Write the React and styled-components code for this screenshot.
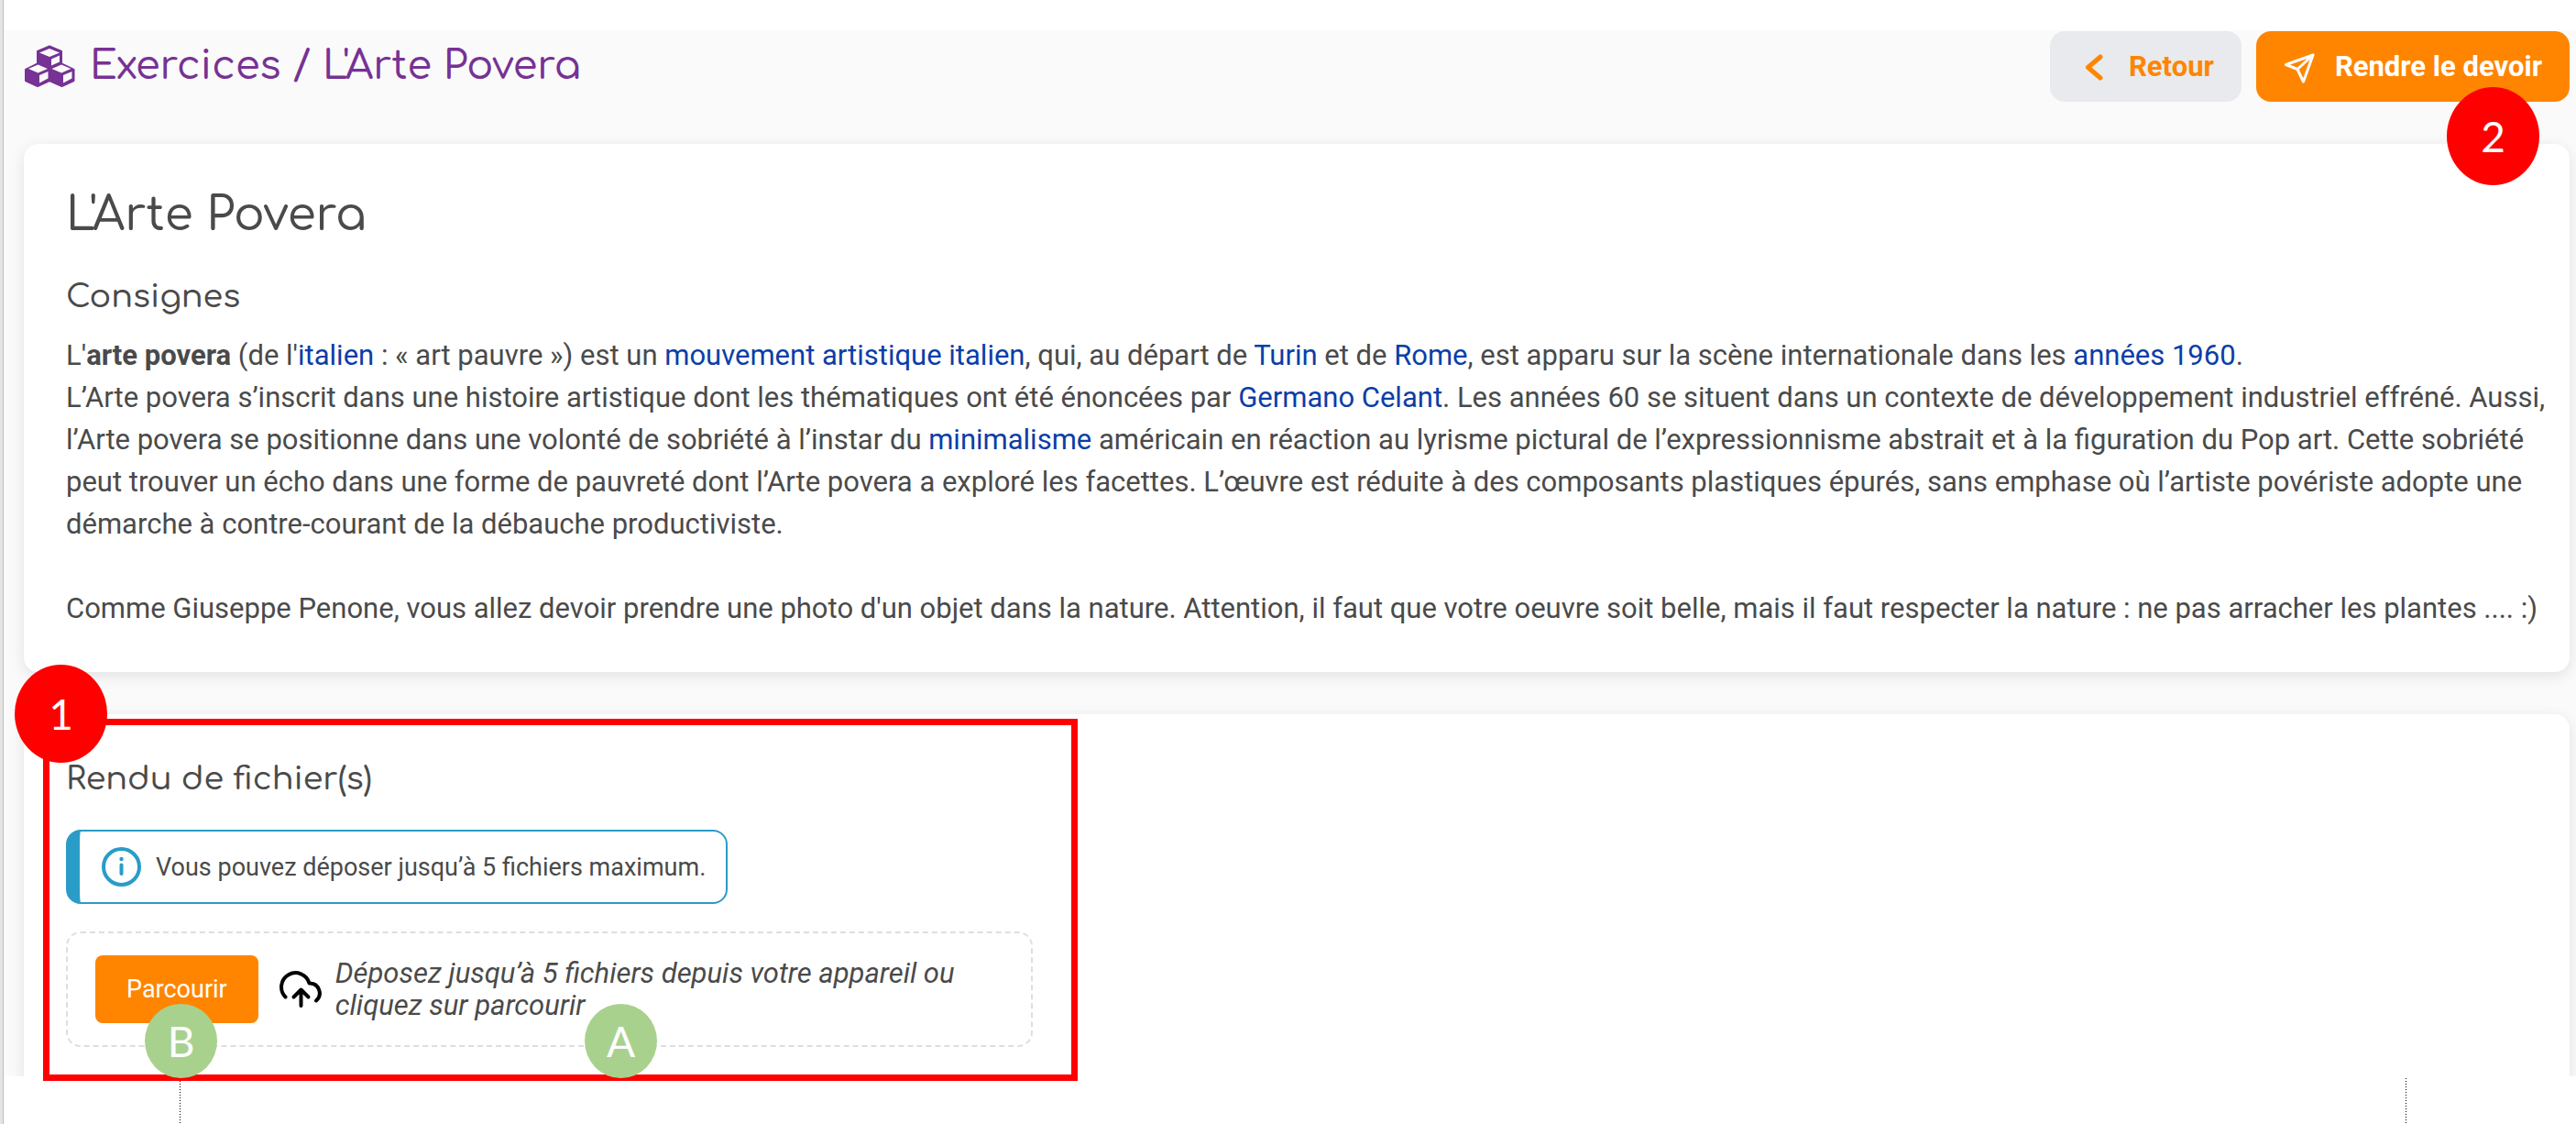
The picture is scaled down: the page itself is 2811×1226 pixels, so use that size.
import React from "react";
import styled, { createGlobalStyle } from "styled-components";

const GlobalStyle = createGlobalStyle`
  * { box-sizing: border-box; }
  body { margin: 0; background: #fff; color: #4a4a4a; font-family: Roboto, "Liberation Sans", sans-serif; }
  h1, h2, h3, p { margin: 0; }
  svg { display: block; flex: none; }
`;

const headingFont = `Comfortaa, "Open Sans", sans-serif`;

const Shell = styled.div`
  border-left: 3px solid #e4e4e4;
`;

const Page = styled.div`
  display: flex;
  flex-direction: column;
  min-height: 100vh;
  padding-top: 33px;
  border-left: 1px solid #bdbdbd;
`;

const Sheet = styled.main`
  padding: 1px 7px 0 22px;
  background: #fafafa;
`;

const Header = styled.header`
  display: flex;
  justify-content: space-between;
  align-items: center;
  margin-bottom: 46px;
`;

const Heading = styled.h1`
  display: flex;
  align-items: center;
  gap: 16px;
  color: #763294;
  font: 500 43px/52px ${headingFont};
`;

const HeadingText = styled.span`
  padding-bottom: 2px;
`;

const Actions = styled.div`
  display: flex;
  gap: 16px;
`;

const ActionButton = styled.button`
  position: relative;
  display: flex;
  align-items: center;
  gap: 22px;
  height: 77px;
  padding: 0 30px;
  border: 0;
  border-radius: 16px;
  background: ${(p) => (p.$primary ? "#ff8500" : "#e9eaee")};
  color: ${(p) => (p.$primary ? "#fff" : "#ff8500")};
  font: 700 31px/36px Roboto, sans-serif;
`;

const Card = styled.section`
  position: relative;
  padding: 46px 20px ${(p) => (p.$last ? "32px" : "46px")} 46px;
  margin-bottom: ${(p) => (p.$last ? "0" : "46px")};
  border-radius: ${(p) => (p.$last ? "16px 16px 0 0" : "16px")};
  background: #fff;
  box-shadow: 0 4px 16px rgba(0, 0, 0, 0.1);
`;

const Title = styled.h2`
  margin-bottom: 32px;
  font: 500 50px/64px ${headingFont};
`;

const Subtitle = styled.h3`
  margin-bottom: ${(p) => p.$gap};
  font: 500 35px/50px ${headingFont};
`;

const Paragraph = styled.p`
  font-size: 31px;
  line-height: 46px;
  & + & { margin-top: 46px; }
`;

const Link = styled.a`
  color: #0a3ea8;
  text-decoration: none;
`;

const Notice = styled.div`
  display: flex;
  align-items: center;
  gap: 16px;
  width: fit-content;
  height: 81px;
  padding: 0 22px 0 24px;
  border: 2px solid #2a9cc8;
  border-left-width: 15px;
  border-radius: 16px;
  font-size: 27px;
  margin-bottom: 30px;
`;

const DropZone = styled.div`
  display: flex;
  align-items: center;
  width: 1055px;
  max-width: 100%;
  padding: 24px 30px;
  border: 2px dashed #dedede;
  border-radius: 16px;
`;

const BrowseButton = styled.button`
  height: 74px;
  margin-right: 22px;
  padding: 0 34px;
  border: 0;
  border-radius: 8px;
  background: #ff8500;
  color: #fff;
  font: 400 27px/32px Roboto, sans-serif;
`;

const DropText = styled.p`
  flex: 1;
  margin-left: 12px;
  font-style: italic;
  font-size: 31px;
  line-height: 35px;
`;

const Frame = styled.div`
  position: absolute;
  z-index: 2;
  left: 21px;
  top: 5px;
  bottom: -5px;
  width: 1129px;
  border: 7px solid #f00;
`;

const Marker = styled.span`
  position: absolute;
  z-index: 3;
  display: flex;
  align-items: center;
  justify-content: center;
  border-radius: 50%;
  color: #fff;
  font: 400 46px/54px Lato, sans-serif;
`;

const StepMarker = styled(Marker)`
  width: 101px;
  height: 107px;
  background: #f00;
`;

const PartMarker = styled(Marker)`
  width: 79px;
  height: 81px;
  background: #a9d18e;
`;

const SubmitMarker = styled(StepMarker)`
  top: 61px;
  right: 33px;
`;

const UploadMarker = styled(StepMarker)`
  top: -54px;
  left: -10px;
`;

const BrowseMarker = styled(PartMarker)`
  bottom: -2px;
  left: 132px;
`;

const DropMarker = styled(PartMarker)`
  bottom: -2px;
  left: 612px;
`;

const Footer = styled.footer`
  position: relative;
  z-index: 1;
  display: flex;
  flex: 1;
  justify-content: space-between;
  min-height: 52px;
  padding: 2px 185px 0 192px;
  background: #fff;
`;

const Guide = styled.div`
  width: 1px;
  background: repeating-linear-gradient(#000 0 1px, transparent 1px 3px);
`;

function CubesIcon() {
  return (
    <svg width="56" height="47" viewBox="16 10 56 47" aria-hidden="true">
      <g fill="#763294" stroke="#763294" strokeWidth="2" strokeLinejoin="round">
        <path d="M44 11.5 57 17V31L44 37 31 31V17Z" />
        <path d="M31 30.5 44 37V49L31 55 18 49V37Z" />
        <path d="M57 30.5 70.500 37V49L57.500 55 44 49V37Z" />
      </g>
      <g fill="#fafafa">
        <path d="M44 14 55 18.500 44 23 33 18.500Z" />
        <path d="M46 25.500 55 21.500V28.500L46 32.500Z" />
        <path d="M31.500 31.500 42 36 31.500 40.500 21 36Z" />
        <path d="M33 43 42.500 39V46.500L33 51.500Z" />
        <path d="M57 31.500 67.500 36 57 40.500 46.500 36Z" />
        <path d="M59 43 68.500 39V46.500L59 51.500Z" />
      </g>
    </svg>
  );
}

function BackIcon() {
  return (
    <svg width="34" height="36" viewBox="0 0 34 36" fill="none" stroke="currentColor" strokeWidth="5" strokeLinecap="round" strokeLinejoin="round" aria-hidden="true">
      <path d="M25 7 11.500 18.500 25 30" />
    </svg>
  );
}

function SendIcon() {
  return (
    <svg width="34" height="36" viewBox="0 0 34 36" fill="none" stroke="currentColor" strokeWidth="3" strokeLinejoin="round" aria-hidden="true">
      <path d="M32 5 2.500 15.500 15 20.500 21.500 34ZM15 20.500 32 5" />
    </svg>
  );
}

function InfoIcon() {
  return (
    <svg width="43" height="43" viewBox="0 0 43 43" fill="none" stroke="#2a9cc8" strokeWidth="4" strokeLinecap="round" aria-hidden="true">
      <circle cx="21.500" cy="21.500" r="19.500" />
      <path d="M21.500 19.500V29" />
      <circle cx="21.500" cy="13" r="2.200" fill="#2a9cc8" stroke="none" />
    </svg>
  );
}

function UploadIcon() {
  return (
    <svg width="50" height="42" viewBox="0 0 50 42" fill="none" stroke="#000" strokeWidth="4" strokeLinecap="round" strokeLinejoin="round" aria-hidden="true">
      <path d="M7.500 29.500A15.500 15.500 0 1 1 33.500 14.500H34.500A10.800 10.800 0 0 1 41 33.500" />
      <path d="M24.500 39V21.500M16.500 29.500 24.500 21.500 32.500 29.500" />
    </svg>
  );
}

export default function App() {
  return (
    <>
      <GlobalStyle />
      <Shell>
        <Page>
          <Sheet>
            <Header>
              <Heading>
                <CubesIcon />
                <HeadingText>Exercices / L'Arte Povera</HeadingText>
              </Heading>
              <Actions>
                <ActionButton type="button">
                  <BackIcon />
                  Retour
                </ActionButton>
                <ActionButton type="button" $primary>
                  <SendIcon />
                  Rendre le devoir
                  <SubmitMarker>2</SubmitMarker>
                </ActionButton>
              </Actions>
            </Header>
            <Card>
              <Title>L'Arte Povera</Title>
              <Subtitle $gap="16px">Consignes</Subtitle>
              <Paragraph>
                L'<b>arte povera</b> (de l'<Link href="#italien">italien</Link>&nbsp;: «&nbsp;art pauvre&nbsp;») est un <Link href="#mouvement">mouvement artistique italien</Link>, qui, au départ de <Link href="#turin">Turin</Link> et de <Link href="#rome">Rome</Link>, est apparu sur la scène internationale dans les <Link href="#annees-1960">années 1960</Link>.<br />
                L’Arte povera s’inscrit dans une histoire artistique dont les thématiques ont été énoncées par <Link href="#celant">Germano Celant</Link>. Les années 60 se situent dans un contexte de développement industriel effréné. Aussi, l’Arte povera se positionne dans une volonté de sobriété à l’instar du <Link href="#minimalisme">minimalisme</Link> américain en réaction au lyrisme pictural de l’expressionnisme abstrait et à la figuration du Pop art. Cette sobriété peut trouver un écho dans une forme de pauvreté dont l’Arte povera a exploré les facettes. L’œuvre est réduite à des composants plastiques épurés, sans emphase où l’artiste povériste adopte une démarche à contre-courant de la débauche productiviste.
              </Paragraph>
              <Paragraph>
                Comme Giuseppe Penone, vous allez devoir prendre une photo d'un objet dans la nature. Attention, il faut que votre oeuvre soit belle, mais il faut respecter la nature : ne pas arracher les plantes .... :)
              </Paragraph>
            </Card>
            <Card $last>
              <Subtitle $gap="30px">Rendu de fichier(s)</Subtitle>
              <Notice>
                <InfoIcon />
                Vous pouvez déposer jusqu’à 5 fichiers maximum.
              </Notice>
              <DropZone>
                <BrowseButton type="button">Parcourir</BrowseButton>
                <UploadIcon />
                <DropText>Déposez jusqu’à 5 fichiers depuis votre appareil ou cliquez sur parcourir</DropText>
              </DropZone>
              <Frame />
              <UploadMarker>1</UploadMarker>
              <BrowseMarker>B</BrowseMarker>
              <DropMarker>A</DropMarker>
            </Card>
          </Sheet>
          <Footer>
            <Guide />
            <Guide />
          </Footer>
        </Page>
      </Shell>
    </>
  );
}
